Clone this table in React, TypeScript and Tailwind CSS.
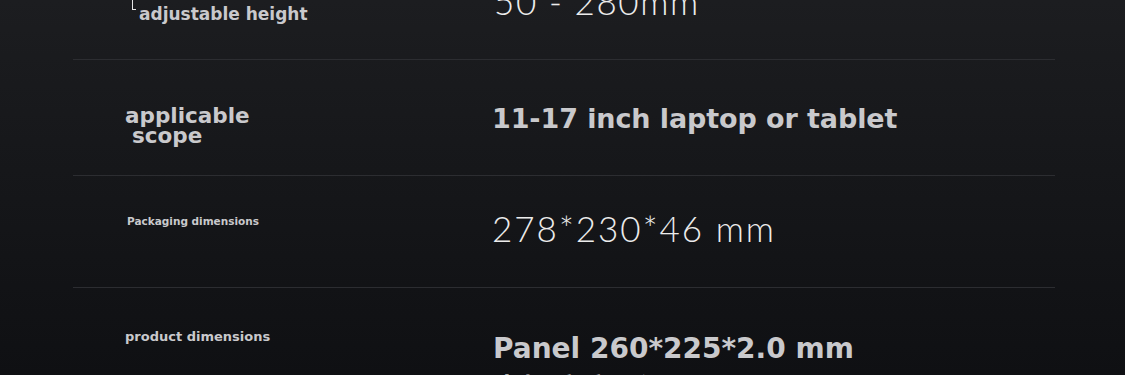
const bold = "font-['DejaVu_Sans','Liberation_Sans',sans-serif] font-bold";
const thin = "font-['Lato','Liberation_Sans',sans-serif] font-light";

export default function App() {
  return (
    <div className="h-[375px] w-[1125px] overflow-hidden bg-gradient-to-b from-[#1c1d20] to-[#0f1013]">
      <div className="-mt-[56px] ml-[73px] w-[982px]">
        {/* adjustable height */}
        <div className="grid h-[116px] grid-cols-[419px_1fr] border-b border-[#2c2d31]">
          <div className="relative pl-[66px] pt-[62px]">
            <span className="absolute left-[59px] top-[56px] h-[10px] w-[4px] border-b border-l border-[#e6e6e6]" />
            <p className={`${bold} text-[17px] leading-none text-[#c9c9cc]`}>adjustable height</p>
          </div>
          <div className="pl-[2px] pt-[40px]">
            <p className={`${thin} text-[35px] leading-none tracking-[1.6px] text-[#ececec]`}>50 - 280mm</p>
          </div>
        </div>

        {/* applicable scope */}
        <div className="grid h-[116px] grid-cols-[419px_1fr] border-b border-[#2c2d31]">
          <div className="pl-[52px] pt-[46px]">
            <p className={`${bold} text-[21.5px] leading-[20px] text-[#c9c9cc]`}>
              <span className="block">applicable</span>
              <span className="block pl-[7px]">scope</span>
            </p>
          </div>
          <div className="pt-[45px]">
            <p className={`${bold} text-[27px] leading-none tracking-[-0.1px] text-[#c9c9cc]`}>11-17 inch laptop or tablet</p>
          </div>
        </div>

        {/* packaging */}
        <div className="grid h-[112px] grid-cols-[419px_1fr] border-b border-[#2c2d31]">
          <div className="pl-[54px] pt-[40px]">
            <p className={`${bold} text-[10.5px] leading-none text-[#c9c9cc]`}>Packaging dimensions</p>
          </div>
          <div className="pt-[35px]">
            <p className={`${thin} text-[35px] leading-none tracking-[2px] text-[#ececec]`}>278*230*46 mm</p>
          </div>
        </div>

        {/* product */}
        <div className="grid h-[116px] grid-cols-[419px_1fr]">
          <div className="pl-[52px] pt-[42px]">
            <p className={`${bold} text-[13px] leading-none text-[#c9c9cc]`}>product dimensions</p>
          </div>
          <div className="pl-[1px] pt-[47px]">
            <p className={`${bold} text-[28px] leading-none text-[#c9c9cc]`}>Panel 260*225*2.0 mm</p>
            <p className="mt-[10px] font-['Noto_Sans_CJK_SC',sans-serif] text-[28px] font-bold leading-none text-[#c9c9cc]">
              支架 高度可调
            </p>
          </div>
        </div>
      </div>
    </div>
  );
}
